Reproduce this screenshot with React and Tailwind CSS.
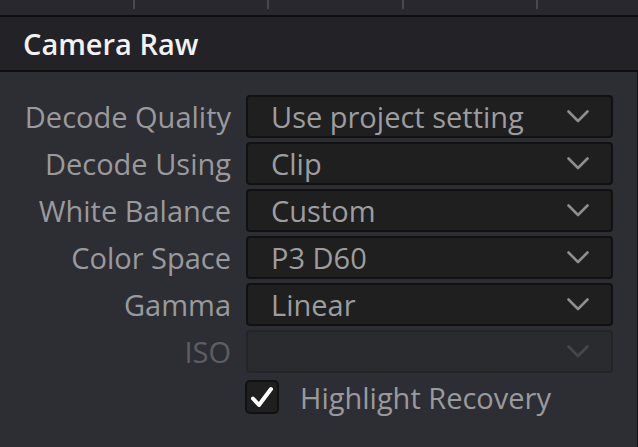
import React from "react";

const Chevron = ({ dim }) => (
  <svg width="22" height="13" viewBox="0 0 22 13" className="shrink-0">
    <polyline
      points="1.5,1.5 11,11 20.5,1.5"
      fill="none"
      stroke={dim ? "#46474c" : "#8e8e90"}
      strokeWidth="2.6"
      strokeLinecap="round"
      strokeLinejoin="round"
    />
  </svg>
);

const rows = [
  { label: "Decode Quality", value: "Use project setting" },
  { label: "Decode Using", value: "Clip" },
  { label: "White Balance", value: "Custom" },
  { label: "Color Space", value: "P3 D60" },
  { label: "Gamma", value: "Linear" },
  { label: "ISO", value: "", disabled: true },
];

export default function App() {
  return (
    <div
      className="w-[638px] h-[447px] overflow-hidden flex flex-col bg-[#2d2e33]"
      style={{ fontFamily: '"Open Sans", "Noto Sans", sans-serif' }}
    >
      <div className="h-[15px] shrink-0 bg-[#28282e] flex">
        {[0, 1, 2, 3, 4].map((i) => (
          <div key={i} className="w-[134.5px] shrink-0 flex justify-end">
            <div className="w-[2px] h-[9px] bg-[#48484e]" />
          </div>
        ))}
      </div>
      <div className="h-[2px] shrink-0 bg-[#0e0e10]" />
      <div className="h-[53px] shrink-0 bg-[#222227] flex items-center pl-[23px]">
        <span className="text-[29px] font-semibold text-[#f2f2f2] leading-none">Camera Raw</span>
      </div>
      <div className="h-[2px] shrink-0 bg-[#0e0e10]" />
      <div className="flex-1 border-r border-[#141416] pt-[23px] flex flex-col">
        <div className="flex flex-col gap-[4px]">
          {rows.map((r) => (
            <div key={r.label} className="flex items-center h-[43px]">
              <div
                className={`w-[231px] shrink-0 text-right text-[29px] leading-none whitespace-nowrap ${
                  r.disabled ? "text-[#5d5e62]" : "text-[#9a9a9c]"
                }`}
              >
                {r.label}
              </div>
              <div
                className={`ml-[15px] w-[367px] h-[43px] rounded-[4px] border-2 flex items-center pl-[23px] pr-[22px] ${
                  r.disabled
                    ? "bg-[#2a2b2f] border-[#232427]"
                    : "bg-[#1f1f20] border-[#111112]"
                }`}
              >
                <span className="flex-1 text-[29px] leading-none text-[#9d9d9f] whitespace-nowrap">{r.value}</span>
                <Chevron dim={r.disabled} />
              </div>
            </div>
          ))}
        </div>
        <div className="flex items-center mt-[7px] ml-[245px]">
          <div className="w-[34px] h-[34px] rounded-[5px] bg-[#1f1f20] border-2 border-[#111112] flex items-center justify-center">
            <svg width="24" height="22" viewBox="0 0 24 22">
              <path
                d="M3 12.5 L9 19 L21 3"
                fill="none"
                stroke="#ffffff"
                strokeWidth="4"
                strokeLinecap="round"
                strokeLinejoin="round"
              />
            </svg>
          </div>
          <span className="ml-[21px] text-[29px] leading-none text-[#9a9a9c]">Highlight Recovery</span>
        </div>
      </div>
    </div>
  );
}
